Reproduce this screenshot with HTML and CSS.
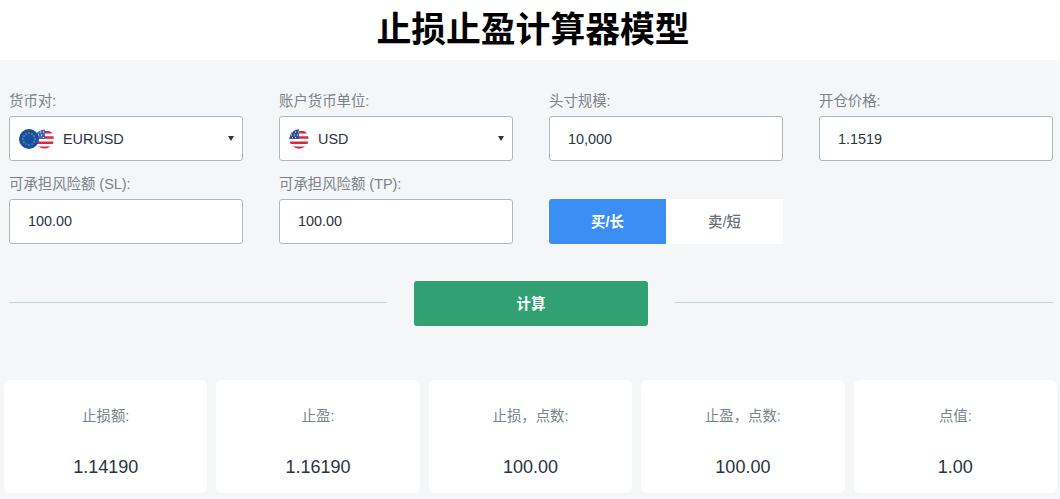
FILE: index.html
```html
<!DOCTYPE html>
<html lang="zh-CN">
<head>
<meta charset="utf-8">
<title>止损止盈计算器模型</title>
<link rel="stylesheet" href="styles.css">
</head>
<body>
<header class="title-bar"><h1>止损止盈计算器模型</h1></header>
<main class="calc">
  <section class="form-grid">
    <div class="field">
      <label class="label">货币对:</label>
      <div class="box select">
        <svg class="flag-pair" width="36" height="20" viewBox="0 0 36 20">
          <defs>
            <clipPath id="c2"><circle cx="25.5" cy="10" r="9.5"/></clipPath>
          </defs>
          <g clip-path="url(#c2)">
            <rect x="16" width="20" height="20" fill="#fff"/>
            <path d="M16 2h20v2.6H16zM16 7.2h20v2.6H16zM16 12.4h20v2.6H16zM16 17.6h20V20H16z" fill="#d8293f"/>
            <rect x="16" width="10" height="10" fill="#4a69b4"/>
            <path d="M18 3h1M21 3h1M24 3h1M19 6h1M22 6h1M18 8.5h1M24 8.5h1" stroke="#fff" stroke-width="1"/>
          </g>
          <circle cx="10" cy="10" r="10" fill="#1550a8"/>
          <g fill="#c9b83a">
            <circle cx="10" cy="4" r=".7"/><circle cx="13" cy="4.9" r=".7"/><circle cx="15.1" cy="7" r=".7"/><circle cx="16" cy="10" r=".7"/><circle cx="15.1" cy="13" r=".7"/><circle cx="13" cy="15.1" r=".7"/><circle cx="10" cy="16" r=".7"/><circle cx="7" cy="15.1" r=".7"/><circle cx="4.9" cy="13" r=".7"/><circle cx="4" cy="10" r=".7"/><circle cx="4.9" cy="7" r=".7"/><circle cx="7" cy="4.9" r=".7"/>
          </g>
        </svg>
        <span class="value">EURUSD</span>
        <span class="caret"></span>
      </div>
    </div>
    <div class="field">
      <label class="label">账户货币单位:</label>
      <div class="box select">
        <svg class="flag" width="20" height="20" viewBox="0 0 20 20">
          <defs><clipPath id="c3"><circle cx="10" cy="10" r="9.7"/></clipPath></defs>
          <g clip-path="url(#c3)">
            <rect width="20" height="20" fill="#fff"/>
            <path d="M0 2h20v2.6H0zM0 7.2h20v2.6H0zM0 12.4h20v2.6H0zM0 17.6h20V20H0z" fill="#d8293f"/>
            <rect width="10" height="10" fill="#33509c"/>
            <path d="M3 3h1M6 3h1M9 3h1M2 6h1M5 6h1M8 6h1M3 8.5h1M6 8.5h1" stroke="#fff" stroke-width="1"/>
          </g>
        </svg>
        <span class="value">USD</span>
        <span class="caret"></span>
      </div>
    </div>
    <div class="field">
      <label class="label">头寸规模:</label>
      <div class="box input">10,000</div>
    </div>
    <div class="field">
      <label class="label">开仓价格:</label>
      <div class="box input">1.1519</div>
    </div>
    <div class="field">
      <label class="label">可承担风险额 (SL):</label>
      <div class="box input input-low">100.00</div>
    </div>
    <div class="field">
      <label class="label">可承担风险额 (TP):</label>
      <div class="box input input-low">100.00</div>
    </div>
    <div class="field">
      <span class="label label-empty"></span>
      <div class="toggle">
        <button class="toggle-btn active">买/长</button>
        <button class="toggle-btn">卖/短</button>
      </div>
    </div>
  </section>
  <section class="action">
    <span class="rule"></span>
    <button class="calc-btn">计算</button>
    <span class="rule"></span>
  </section>
  <section class="results">
    <div class="card"><div class="card-label">止损额:</div><div class="card-value">1.14190</div></div>
    <div class="card"><div class="card-label">止盈:</div><div class="card-value">1.16190</div></div>
    <div class="card"><div class="card-label">止损，点数:</div><div class="card-value">100.00</div></div>
    <div class="card"><div class="card-label">止盈，点数:</div><div class="card-value">100.00</div></div>
    <div class="card"><div class="card-label">点值:</div><div class="card-value">1.00</div></div>
  </section>
</main>
</body>
</html>
```
FILE: styles.css
```css
* { box-sizing: border-box; }
html, body { margin: 0; height: 100%; overflow: hidden; }
body {
  background: #f4f6f8;
  font-family: "Liberation Sans", "Noto Sans CJK SC", sans-serif;
  color: #2a3340;
}
.title-bar { background: #fff; height: 60px; display: flex; justify-content: center; align-items: center; }
.title-bar h1 { margin: 0 0 0 6px; font-size: 34.8px; line-height: 44px; font-weight: 700; color: #000; }
.calc { display: flex; flex-direction: column; }
.form-grid {
  display: grid;
  grid-template-columns: repeat(4, 234px);
  column-gap: 36px;
  row-gap: 12px;
  padding: 30px 0 0 9px;
}
.field { display: flex; flex-direction: column; }
.label { height: 26px; font-size: 14.4px; line-height: 22px; color: #78838c; display: block; }
.box {
  height: 45px;
  background: #fff;
  border: 1px solid #adb8c0;
  border-radius: 3px;
  display: flex;
  align-items: center;
  font-size: 14.4px;
}
.input { padding-left: 18px; }
.input-low { padding-bottom: 2px; }
.select { padding: 0 8px 0 9px; }
.flag-pair { margin-right: 8px; }
.flag { margin-right: 9px; }
.value { flex: 1; }
.caret {
  width: 0; height: 0;
  border-left: 3px solid transparent;
  border-right: 3px solid transparent;
  border-top: 5px solid #333;
}
.toggle { display: flex; height: 45px; }
.toggle-btn {
  flex: 1;
  border: 0;
  background: #fff;
  color: #666e76;
  font: 500 14.4px "Liberation Sans", "Noto Sans CJK SC", sans-serif;
  padding: 0 0 3px;
}
.toggle-btn.active { background: #3b8ef3; color: #fff; border-radius: 3px 0 0 3px; font-weight: 700; }
.action { display: flex; align-items: center; padding: 37px 7px 0 9px; gap: 27px; }
.rule { flex: 1; height: 1px; background: #c4d1d6; margin-bottom: 2px; }
.calc-btn {
  width: 234px;
  height: 45px;
  border: 0;
  border-radius: 3px;
  background: #31a072;
  color: #fff;
  font: 700 14.4px "Liberation Sans", "Noto Sans CJK SC", sans-serif;
  padding: 0 0 3px;
}
.results {
  display: grid;
  grid-template-columns: repeat(5, 1fr);
  column-gap: 9px;
  padding: 54px 3px 0 4px;
}
.card {
  height: 113px;
  background: #fff;
  border-radius: 6px;
  text-align: center;
  padding-top: 26px;
}
.card-label { font-size: 14.4px; line-height: 20px; color: #78838c; }
.card-value { margin-top: 30px; font-size: 18px; line-height: 22px; color: #2a3340; }
```
